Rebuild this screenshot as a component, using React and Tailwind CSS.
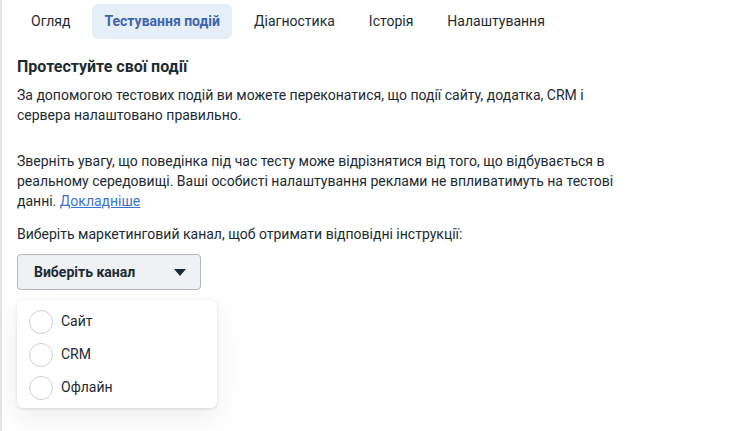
import React from "react";

const tabs = ["Огляд", "Тестування подій", "Діагностика", "Історія", "Налаштування"];

function Radio({ label }) {
  return (
    <div className="flex items-center h-[33px] pl-3">
      <span className="w-6 h-6 rounded-full border border-[#cbd2d9] bg-white shrink-0" />
      <span className="ml-2 text-[14px] text-[#1c2b33]">{label}</span>
    </div>
  );
}

export default function App() {
  return (
    <div
      className="w-[751px] h-[431px] bg-white overflow-hidden border-l-2 border-[#e4e4e8] text-[#1c2b33]"
      style={{ fontFamily: 'Roboto, "Noto Sans", sans-serif' }}
    >
      <div className="flex items-center gap-[10px] pl-[17px] pt-1">
        {tabs.map((t, i) => (
          <div
            key={t}
            className={
              i === 1
                ? "h-[35px] px-3 flex items-center rounded-md bg-[#e6eef8] text-[#3d64ad] font-bold text-[14px]"
                : "h-[35px] px-3 flex items-center text-[14px] text-[#1c2b33]"
            }
          >
            {t}
          </div>
        ))}
      </div>

      <div className="pl-[15px] pt-[17px] w-[622px]">
        <h2 className="text-[16px] font-bold leading-[22px]">Протестуйте свої події</h2>
        <p className="mt-[7px] text-[14px] leading-[20px]">
          За допомогою тестових подій ви можете переконатися, що події сайту, додатка, CRM і сервера налаштовано правильно.
        </p>
        <p className="mt-[26px] text-[14px] leading-[20px]">
          Зверніть увагу, що поведінка під час тесту може відрізнятися від того, що відбувається в реальному середовищі. Ваші особисті налаштування реклами не впливатимуть на тестові данні.{" "}
          <span className="text-[#3b73d0] underline">Докладніше</span>
        </p>
        <p className="mt-[13px] text-[14px] leading-[20px]">
          Виберіть маркетинговий канал, щоб отримати відповідні інструкції:
        </p>
        <div className="mt-[10px] w-[184px] h-[36px] rounded-[4px] border border-[#b2b8bf] bg-[#eff1f3] flex items-center justify-between pl-4 pr-[14px]">
          <span className="text-[14px] font-bold">Виберіть канал</span>
          <svg width="12" height="7" viewBox="0 0 12 7">
            <path d="M0 0h12L6 7z" fill="#1c2b33" />
          </svg>
        </div>
        <div className="mt-[10px] w-[200px] h-[108px] rounded-md bg-white shadow-[0_1px_3px_rgba(0,0,0,0.12),0_10px_28px_rgba(0,0,0,0.07)] pt-[5px]">
          <Radio label="Сайт" />
          <Radio label="CRM" />
          <Radio label="Офлайн" />
        </div>
      </div>
    </div>
  );
}
